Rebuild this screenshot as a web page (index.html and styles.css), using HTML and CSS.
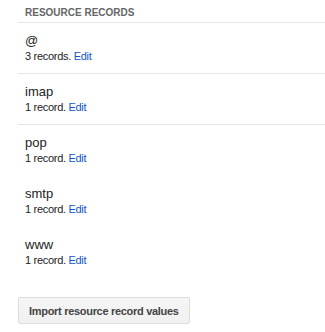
FILE: index.html
```html
<!DOCTYPE html>
<html lang="en">
<head>
    <meta charset="UTF-8">
    <meta name="viewport" content="width=device-width, initial-scale=1.0">
    <title>Resource Records</title>
    <link rel="stylesheet" href="styles.css">
</head>
<body>
    <div class="records">
        <div class="records-header">Resource records</div>
        <div class="record">
            <div class="record-name">@</div>
            <div class="record-info">3 records. <a href="#">Edit</a></div>
        </div>
        <div class="record">
            <div class="record-name">imap</div>
            <div class="record-info">1 record. <a href="#">Edit</a></div>
        </div>
        <div class="record plain">
            <div class="record-name">pop</div>
            <div class="record-info">1 record. <a href="#">Edit</a></div>
        </div>
        <div class="record plain">
            <div class="record-name">smtp</div>
            <div class="record-info">1 record. <a href="#">Edit</a></div>
        </div>
        <div class="record plain">
            <div class="record-name">www</div>
            <div class="record-info">1 record. <a href="#">Edit</a></div>
        </div>
        <button class="import-btn">Import resource record values</button>
    </div>
</body>
</html>
```

FILE: styles.css
```css
body {
    margin: 0;
    font-family: "Liberation Sans", Arial, sans-serif;
    color: #222;
    background-color: #fff;
}
.records {
    margin-left: 18px;
}
.records-header {
    padding: 7px 7px 3px;
    font-size: 10px;
    line-height: 12px;
    font-weight: bold;
    text-transform: uppercase;
    color: #666;
    border-bottom: 1px solid #e5e5e5;
}
.record {
    padding: 9px 7px 10px;
    border-bottom: 1px solid #e5e5e5;
}
.record.plain {
    border-bottom-color: transparent; /* no divider after imap */
}
.record-name {
    font-size: 13px;
    line-height: 17px;
}
.record-info {
    font-size: 11px;
    line-height: 14px;
    letter-spacing: -0.3px;
}
.record-info a {
    color: #15c;
    text-decoration: none;
}
.import-btn {
    margin-top: 19px;
    height: 27px;
    padding: 0 10px;
    font-family: inherit;
    font-size: 11px;
    font-weight: bold;
    letter-spacing: -0.3px;
    color: #444;
    background-color: #f3f3f3;
    background-image: linear-gradient(#f5f5f5, #f1f1f1);
    border: 1px solid #dcdcdc;
    border-radius: 2px;
    cursor: pointer;
}
```
